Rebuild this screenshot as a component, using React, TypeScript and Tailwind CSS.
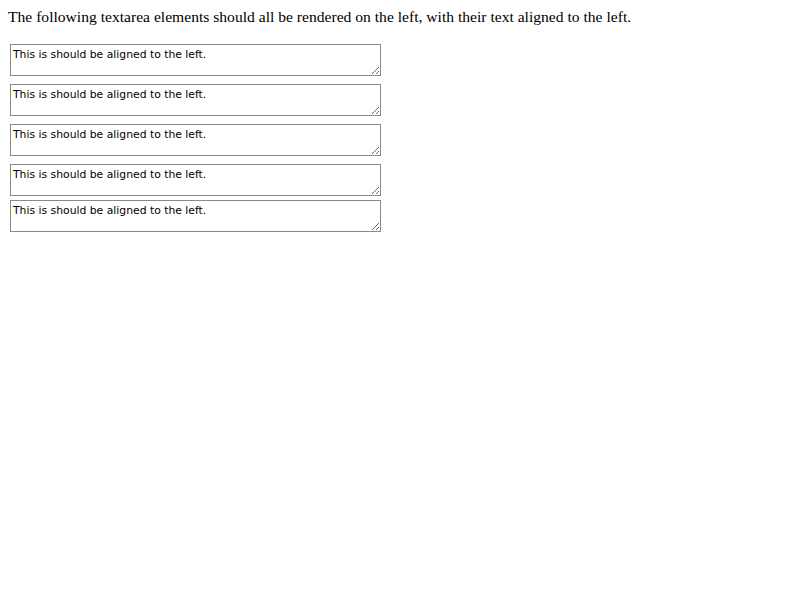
export default function App() {
  const rows = ['mt-[18px]', 'mt-[8px]', 'mt-[8px]', 'mt-[8px]', 'mt-[4px]'];
  return (
    <div className="min-h-screen bg-white px-2 pt-2">
      <p className="font-['Liberation_Serif',serif] text-[15.6px] leading-[18px] text-black">
        The following textarea elements should all be rendered on the left, with their text aligned to the left.
      </p>
      <div className="flex flex-col items-start">
        {rows.map((m, i) => (
          <textarea
            key={i}
            readOnly
            defaultValue="This is should be aligned to the left."
            className={`${m} ml-[2px] h-[32px] w-[371px] border border-[#8a8a8a] bg-white px-[2px] pt-[3px] pb-[1px] text-left font-['DejaVu_Sans',sans-serif] text-[10.8px] leading-[13px] text-black outline-none`}
          />
        ))}
      </div>
    </div>
  );
}
